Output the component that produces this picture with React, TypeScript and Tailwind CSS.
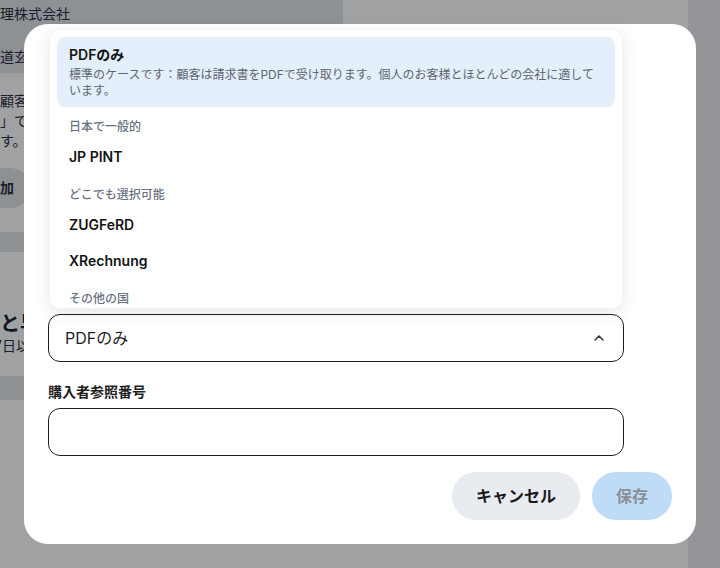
import { ChevronUp } from "lucide-react";

const FORMAT_GROUPS = [
  {
    id: "default",
    label: null,
    items: [
      {
        id: "pdf",
        label: "PDFのみ",
        desc: "標準のケースです：顧客は請求書をPDFで受け取ります。個人のお客様とほとんどの会社に適しています。",
      },
    ],
  },
  { id: "jp", label: "日本で一般的", items: [{ id: "jp-pint", label: "JP PINT", desc: null }] },
  {
    id: "anywhere",
    label: "どこでも選択可能",
    items: [
      { id: "zugferd", label: "ZUGFeRD", desc: null },
      { id: "xrechnung", label: "XRechnung", desc: null },
    ],
  },
  {
    id: "other",
    label: "その他の国",
    items: [
      { id: "peppol", label: "Peppol BIS Billing 3.0", desc: null },
      { id: "facturx", label: "Factur-X", desc: null },
    ],
  },
];

function PageBehind() {
  return (
    <div className="flex min-h-screen bg-white text-sm text-gray-800">
      {/* Left content column, mostly hidden by the dialog */}
      <div className="flex w-[343px] flex-col">
        <div className="flex h-[73px] flex-col bg-[#e1e4e6] pt-1">
          <div className="leading-5">理株式会社</div>
          <div className="mt-[23px] leading-5">道玄</div>
        </div>
        <div className="flex flex-col pb-6 pt-[18px]">
          <p className="leading-5">顧客へ</p>
          <p className="leading-5">」で</p>
          <p className="leading-5">す。</p>
          <div className="-ml-10 mt-[17px] flex h-10 w-fit items-center rounded-full bg-[#e1e4e6] pl-10 pr-4 font-semibold">
            加
          </div>
        </div>
        <div className="h-5 bg-[#e1e4e6]" />
        <div className="flex flex-col pb-5 pt-[60px]">
          <h3 className="text-xl font-bold leading-6 text-gray-900">と早</h3>
          <p className="leading-5">
            <span className="-ml-[6px]">7</span>日以
          </p>
        </div>
        <div className="h-6 bg-[#e1e4e6]" />
        <div className="flex-1" />
      </div>
      <div className="flex-1" />
      <div className="w-8 bg-[#eaebed]" />
    </div>
  );
}

function FormatListbox() {
  return (
    <div
      role="listbox"
      className="absolute inset-x-px bottom-full z-10 mb-[5px] h-[280px] overflow-y-auto rounded-xl border border-gray-100 bg-white p-[7px] shadow-[0_4px_16px_rgba(0,0,0,0.1)] [scrollbar-width:none]"
    >
      {FORMAT_GROUPS.map((group) => (
        <div key={group.id}>
          {group.label && (
            <div className="px-3 pb-1 pt-3 text-xs font-medium leading-4 text-gray-500">{group.label}</div>
          )}
          {group.items.map((item) => {
            const active = item.id === "pdf";
            return (
              <div
                key={item.id}
                role="option"
                aria-selected={active}
                className={`rounded-lg px-3 py-2 ${active ? "bg-[#e3effb]" : ""}`}
              >
                <div className="text-sm font-semibold leading-5 text-[#141414]">{item.label}</div>
                {item.desc && (
                  <div className="mt-0.5 text-xs leading-4 text-[#5f6470]">{item.desc}</div>
                )}
              </div>
            );
          })}
        </div>
      ))}
    </div>
  );
}

export default function App() {
  return (
    <div className="relative min-h-screen font-['Inter','Noto_Sans_CJK_JP',sans-serif]">
      <PageBehind />

      {/* Backdrop */}
      <div className="fixed inset-0 bg-[#111418]/40" />

      {/* Dialog */}
      <div className="fixed inset-0 flex items-center justify-center p-6">
        <div className="flex h-[520px] w-full max-w-2xl flex-col rounded-3xl bg-white p-6">
          <div className="mt-auto max-w-xl">
            <div className="relative">
              <FormatListbox />
              <button
                aria-label="請求書の形式"
                className="flex h-12 w-full items-center justify-between rounded-xl border border-[#1f1f1f] bg-white px-4 text-base text-[#1f1f1f]"
              >
                <span>PDFのみ</span>
                <ChevronUp size={16} strokeWidth={2.25} className="text-[#333]" />
              </button>
            </div>

            <div className="mt-5">
              <label className="mb-1.5 block text-sm font-bold leading-5 text-[#1f1f1f]">購入者参照番号</label>
              <input
                type="text"
                className="block h-12 w-full rounded-xl border border-[#1f1f1f] bg-white px-4 text-base outline-none"
              />
            </div>
          </div>

          <div className="mt-4 flex justify-end gap-3">
            <button className="h-12 rounded-full bg-[#e8ebef] px-6 text-base font-bold text-[#1a1a1a]">
              キャンセル
            </button>
            <button disabled className="h-12 rounded-full bg-[#bedcf8] px-6 text-base font-bold text-[#8a8f96]">
              保存
            </button>
          </div>
        </div>
      </div>
    </div>
  );
}
